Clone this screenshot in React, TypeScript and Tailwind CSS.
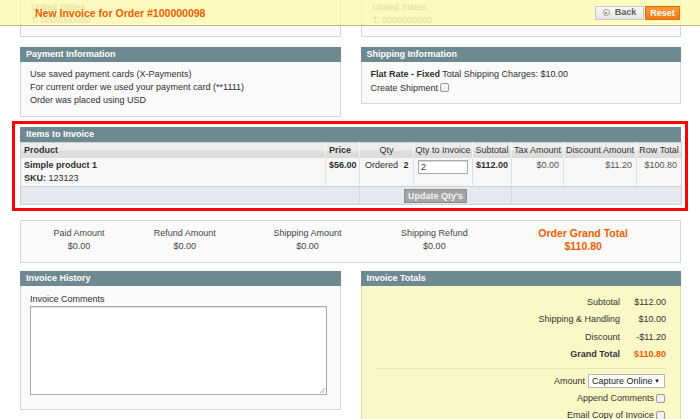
import React from 'react';

const headCls = 'h-[15px] bg-[#6f8992] px-[6px] text-[9px] font-bold leading-[15px] text-white';

function Section({ title, children, className = '' }: { title: string; children: React.ReactNode; className?: string }) {
  return (
    <div>
      <div className={headCls}>{title}</div>
      <div className={`border border-t-0 border-[#d6d6d6] bg-[#fafafa] px-[9px] ${className}`}>{children}</div>
    </div>
  );
}

function Check() {
  return <span className="ml-[2px] inline-block h-[9px] w-[9px] rounded-[2px] border border-[#9a9a9a] bg-[#f1f1f1] align-[-1px]" />;
}

const cols = [305, 34, 54, 59, 39, 52, 73, 45];

export default function App() {
  return (
    <div className="relative h-[419px] w-[700px] overflow-hidden bg-white font-['Liberation_Sans',Arial,sans-serif] text-[9px] leading-[13px] text-[#2f2f2f]">
      <div className="absolute inset-x-0 top-0 z-10 flex h-[26px] items-center justify-between border-b border-[#c4b98c] bg-[#fcf9b3]/85 pl-[35px] pr-[20px]">
        <h3 className="pt-[1px] text-[10.5px] font-bold text-[#eb5e00]">New Invoice for Order #100000098</h3>
        <div className="flex gap-[1px]">
          <button className="flex h-[14px] w-[49px] items-center justify-center gap-[5px] border border-[#c8c8c8] bg-[linear-gradient(#fafafa,#e4e4e4)] text-[9px] font-bold text-[#5e5e5e]">
            <span className="flex h-[7px] w-[7px] items-center justify-center rounded-full border border-[#9b9b9b]">
              <span className="h-[2px] w-[2px] rounded-full bg-[#777]" />
            </span>
            Back
          </button>
          <button className="h-[14px] w-[35px] border border-[#e56a0a] bg-[linear-gradient(#fb9a3c,#f17a14)] text-[9px] font-bold text-white">Reset</button>
        </div>
      </div>

      <div className="pl-[20px] pr-[19px]">
        {/* address boxes (scrolled partly under header) */}
        <div className="-mt-[8px] grid grid-cols-2 gap-[20px]">
          <div className="border border-[#d6d6d6] bg-[#fafafa] px-[10px] pb-[9px] pt-[8px]">
            <div>United States</div>
            <div>T: 0000000000</div>
          </div>
          <div className="border border-[#d6d6d6] bg-[#fafafa] px-[11px] pb-[9px] pt-[8px]">
            <div>United States</div>
            <div>T: 0000000000</div>
          </div>
        </div>

        <div className="mt-[10px] grid grid-cols-2 items-start gap-[20px]">
          <Section title="Payment Information" className="pb-[9px] pt-[6px]">
            <div>Use saved payment cards (X-Payments)</div>
            <div>For current order we used your payment card (**1111)</div>
            <div>Order was placed using USD</div>
          </Section>
          <Section title="Shipping Information" className="pb-[8px] pt-[6px]">
            <div>
              <b>Flat Rate - Fixed</b> Total Shipping Charges: $10.00
            </div>
            <div className="mt-[1px]">
              Create Shipment
              <Check />
            </div>
          </Section>
        </div>

        {/* items to invoice */}
        <div className="-ml-[8px] -mr-[7px] mt-[4px] border-[3px] border-[#ff0000] pb-[3px] pl-[5px] pr-[4px] pt-[3px]">
          <div className={headCls}>Items to Invoice</div>
          <table className="w-[661px] table-fixed border-collapse border border-[#cdd3d5] text-[9px]">
            <colgroup>
              {cols.map((w, i) => (
                <col key={i} style={{ width: w }} />
              ))}
            </colgroup>
            <thead>
              <tr className="h-[15px] bg-[linear-gradient(#ededed,#ededed_45%,#dedede_55%,#dcdcdc)] text-[#333]">
                <th className="border-r border-[#f6f6f6] px-[3px] text-left font-bold">Product</th>
                <th className="border-r border-[#f6f6f6] px-[3px] text-left font-bold">Price</th>
                <th className="border-r border-[#f6f6f6] text-center font-normal">Qty</th>
                <th className="whitespace-nowrap border-r border-[#f6f6f6] text-center font-normal">Qty to Invoice</th>
                <th className="border-r border-[#f6f6f6] text-center font-normal">Subtotal</th>
                <th className="whitespace-nowrap border-r border-[#f6f6f6] text-center font-normal">Tax Amount</th>
                <th className="whitespace-nowrap border-r border-[#f6f6f6] text-center font-normal">Discount Amount</th>
                <th className="whitespace-nowrap text-center font-normal">Row Total</th>
              </tr>
            </thead>
            <tbody>
              <tr className="h-[29px] bg-[#f7f7f7] align-top">
                <td className="border-r border-[#dadfe0] px-[3px] pt-[1px]">
                  <div className="font-bold">Simple product 1</div>
                  <div>
                    <b>SKU:</b> 123123
                  </div>
                </td>
                <td className="border-r border-[#dadfe0] px-[3px] pt-[1px] font-bold">$56.00</td>
                <td className="border-r border-[#dadfe0] pl-[5px] pt-[1px]">
                  Ordered <b className="ml-[3px]">2</b>
                </td>
                <td className="border-r border-[#dadfe0] pl-[4px] pt-[2px]">
                  <div className="h-[14px] w-[50px] border border-[#a9a9a9] bg-white px-[2px] leading-[12px] shadow-[inset_0_1px_1px_rgba(0,0,0,0.15)]">2</div>
                </td>
                <td className="border-r border-[#dadfe0] px-[3px] pt-[1px] font-bold">$112.00</td>
                <td className="border-r border-[#dadfe0] px-[4px] pt-[1px] text-right text-[#555]">$0.00</td>
                <td className="border-r border-[#dadfe0] px-[4px] pt-[1px] text-right text-[#555]">$11.20</td>
                <td className="px-[4px] pt-[1px] text-right text-[#555]">$100.80</td>
              </tr>
              <tr className="h-[18px] border-t border-[#cdd3d5] bg-[#e3e9ee]">
                <td colSpan={2} className="border-r border-[#d0d8de]" />
                <td colSpan={3} className="border-r border-[#d0d8de] text-center">
                  <button className="h-[14px] w-[63px] border border-[#8d8d8d] bg-[#a4a4a4] text-[9px] font-bold text-[#f2f2f2]">Update Qty's</button>
                </td>
                <td colSpan={3} />
              </tr>
            </tbody>
          </table>
        </div>

        {/* amounts summary */}
        <div className="mt-[9px] flex border border-[#d6d6d6] bg-[#fafafa] pb-[9px] pt-[6px] text-center text-[#444]">
          <div className="w-[116px]">
            <div>Paid Amount</div>
            <div>$0.00</div>
          </div>
          <div className="w-[96px]">
            <div>Refund Amount</div>
            <div>$0.00</div>
          </div>
          <div className="w-[150px]">
            <div>Shipping Amount</div>
            <div>$0.00</div>
          </div>
          <div className="w-[104px]">
            <div>Shipping Refund</div>
            <div>$0.00</div>
          </div>
          <div className="w-[194px] text-[10.5px] font-bold text-[#eb5e00]">
            <div>Order Grand Total</div>
            <div>$110.80</div>
          </div>
        </div>

        <div className="mt-[8px] grid grid-cols-2 items-start gap-[20px]">
          <Section title="Invoice History" className="pb-[14px] pt-[7px]">
            <div>Invoice Comments</div>
            <div className="relative h-[89px] w-[297px] border border-[#aaaaaa] bg-white shadow-[inset_0_1px_1px_rgba(0,0,0,0.12)]">
              <svg className="absolute bottom-[1px] right-[1px]" width="6" height="6" viewBox="0 0 6 6">
                <path d="M1 6 L6 1 M3.5 6 L6 3.5" stroke="#999" strokeWidth="0.8" />
              </svg>
            </div>
          </Section>
          <div>
            <div className={headCls}>Invoice Totals</div>
            <div className="border border-t-0 border-[#e1d89c] bg-[#fbf8c8] pb-[20px] pl-[14px] pr-[14px] pt-[8px] text-[#333]">
              <div className="flex flex-col items-end leading-[17.3px]">
                <div className="flex">
                  <span>Subtotal</span>
                  <span className="w-[46px] text-right">$112.00</span>
                </div>
                <div className="flex">
                  <span>Shipping &amp; Handling</span>
                  <span className="w-[46px] text-right">$10.00</span>
                </div>
                <div className="flex">
                  <span>Discount</span>
                  <span className="w-[46px] text-right">-$11.20</span>
                </div>
                <div className="flex font-bold">
                  <span>Grand Total</span>
                  <span className="w-[46px] text-right text-[#eb5e00]">$110.80</span>
                </div>
              </div>
              <div className="mt-[5px] border-t border-[#ece5b4]" />
              <div className="mt-[5px] flex flex-col items-end gap-[4px] pr-[1px]">
                <div className="flex items-center gap-[3px]">
                  <span>Amount</span>
                  <span className="flex h-[14px] w-[77px] items-center justify-between border border-[#b5b5b5] bg-white pl-[3px] pr-[4px] text-[#222]">
                    Capture Online<span className="text-[6px]">▼</span>
                  </span>
                </div>
                <div className="flex items-center leading-[13px]">
                  Append Comments
                  <Check />
                </div>
                <div className="flex items-center leading-[13px]">
                  Email Copy of Invoice
                  <Check />
                </div>
              </div>
            </div>
          </div>
        </div>
      </div>
    </div>
  );
}
